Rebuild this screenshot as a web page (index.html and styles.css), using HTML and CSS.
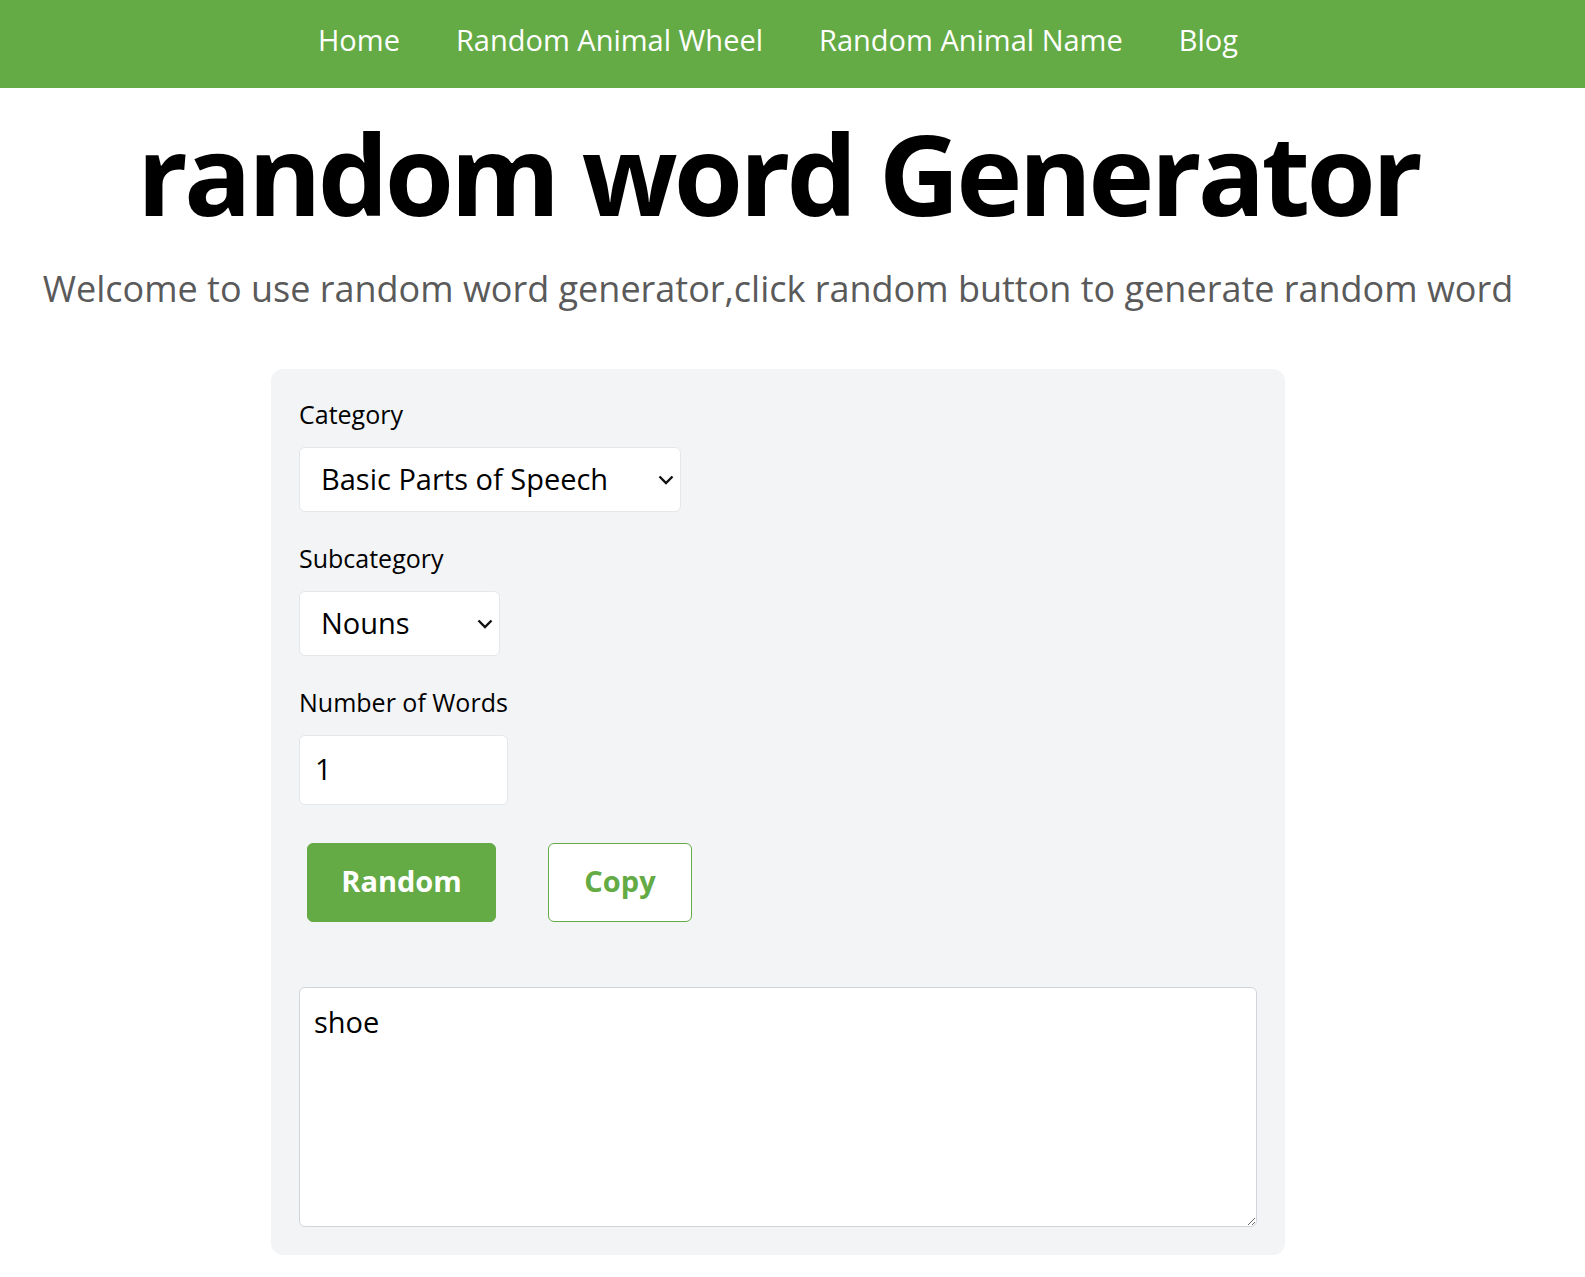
FILE: index.html
```html
<!DOCTYPE html>
<html lang="en">
<head>
<meta charset="utf-8">
<title>random word Generator</title>
<link rel="stylesheet" href="styles.css">
</head>
<body>
<header class="topbar">
  <nav class="nav">
    <a class="nav-link" href="#">Home</a>
    <a class="nav-link" href="#">Random Animal Wheel</a>
    <a class="nav-link" href="#">Random Animal Name</a>
    <a class="nav-link" href="#">Blog</a>
  </nav>
</header>
<main class="main">
  <h1 class="title">random word Generator</h1>
  <p class="subtitle">Welcome to use random word generator,click random button to generate random word</p>
  <section class="card">
    <div class="field">
      <label class="label" for="cat">Category</label>
      <div class="select-wrap select-wide">
        <select id="cat" class="select">
          <option>Basic Parts of Speech</option>
        </select>
        <svg class="chev" width="16" height="10" viewBox="0 0 16 10"><path d="M1.5 1.5 L8 8 L14.5 1.5" fill="none" stroke="#111" stroke-width="2.4"/></svg>
      </div>
    </div>
    <div class="field">
      <label class="label" for="sub">Subcategory</label>
      <div class="select-wrap select-narrow">
        <select id="sub" class="select">
          <option>Nouns</option>
        </select>
        <svg class="chev" width="16" height="10" viewBox="0 0 16 10"><path d="M1.5 1.5 L8 8 L14.5 1.5" fill="none" stroke="#111" stroke-width="2.4"/></svg>
      </div>
    </div>
    <div class="field field-last">
      <label class="label" for="num">Number of Words</label>
      <input id="num" class="num" type="text" value="1">
    </div>
    <div class="actions">
      <button class="btn btn-primary">Random</button>
      <button class="btn btn-outline">Copy</button>
    </div>
    <textarea class="output">shoe</textarea>
  </section>
</main>
</body>
</html>
```
FILE: styles.css
```css
* { box-sizing: border-box; }
html, body { margin: 0; padding: 0; background: #fff; }
body { font-family: "Open Sans", "Noto Sans", sans-serif; color: #000; }

.topbar {
  background: #64aa45;
  height: 88px;
  padding-right: 29px;
  padding-bottom: 8px;
  display: flex;
  align-items: center;
  justify-content: center;
}
.nav { display: flex; gap: 56px; align-items: center; }
.nav-link {
  color: #fff;
  text-decoration: none;
  font-size: 29px;
  line-height: 40px;
}

.main { padding-right: 29px; }

.title {
  margin: 13px 0 0;
  text-align: center;
  font-size: 112px;
  line-height: 144px;
  font-weight: 700;
  letter-spacing: -3.8px;
}
.subtitle {
  margin: 17px 0 0;
  text-align: center;
  font-size: 36px;
  line-height: 54px;
  color: #5a5a5a;
}

.card {
  width: 1014px;
  margin: 53px auto 22px;
  background: #f3f4f6;
  border-radius: 12px;
  padding: 27px 28px 28px;
}
.field { margin-bottom: 28px; }
.field-last { margin-bottom: 38px; }
.label {
  display: block;
  font-size: 25px;
  line-height: 36px;
  margin-bottom: 15px;
}
.select-wrap { position: relative; }
.select-wide { width: 382px; }
.select-narrow { width: 201px; }
.select {
  -webkit-appearance: none;
  appearance: none;
  width: 100%;
  height: 65px;
  background: #fff;
  border: 1px solid #e5e7eb;
  border-radius: 6px;
  padding: 0 40px 2px 21px;
  font-family: inherit;
  font-size: 29px;
  color: #000;
}
.chev {
  position: absolute;
  right: 7px;
  top: 28px;
  pointer-events: none;
}
.num {
  display: block;
  width: 209px;
  height: 70px;
  background: #fff;
  border: 1px solid #e5e7eb;
  border-radius: 6px;
  padding: 0 15px 4px;
  font-family: inherit;
  font-size: 29px;
  color: #000;
}
.actions {
  display: flex;
  gap: 52px;
  padding-left: 8px;
  margin-bottom: 65px;
}
.btn {
  height: 79px;
  border-radius: 6px;
  font-family: inherit;
  font-size: 29px;
  font-weight: 700;
  padding: 0 0 4px;
}
.btn-primary {
  width: 189px;
  background: #64aa45;
  color: #fff;
  border: 1px solid #64aa45;
}
.btn-outline {
  width: 144px;
  background: #fff;
  color: #64aa45;
  border: 1px solid #64aa45;
}
.output {
  display: block;
  width: 958px;
  height: 240px;
  background: #fff;
  border: 1px solid #d1d5db;
  border-radius: 6px;
  padding: 12px 14px;
  font-family: inherit;
  font-size: 29px;
  line-height: 44px;
  color: #000;
}
```
